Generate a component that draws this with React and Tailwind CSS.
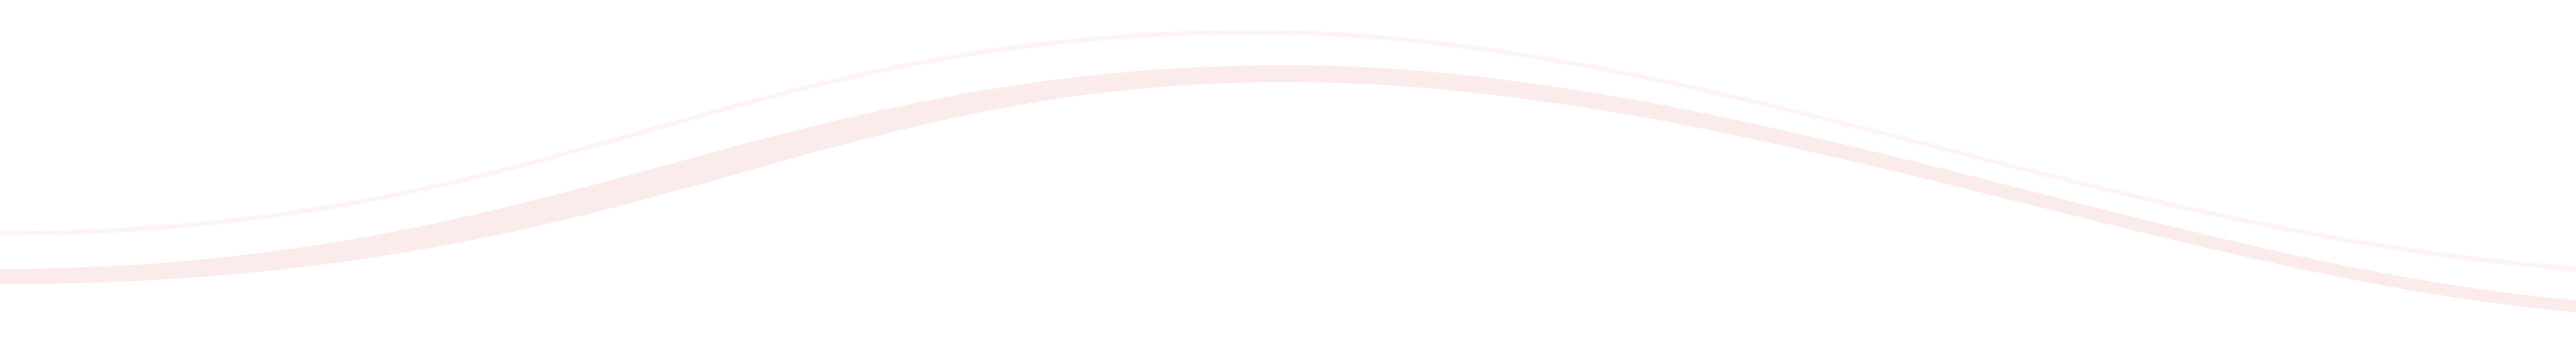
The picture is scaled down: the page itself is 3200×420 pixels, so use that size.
import React from "react";

// two soft waves: a thin light stroke and a pink band under it
const thinLine = "M0,290 C700,290 900,40 1560,40 C2100,40 2600,290 3200,334";

const band =
  "M0,334 C700,334 950,81 1600,81 C2150,81 2700,330 3200,373" +
  " L3200,388 C2700,345 2150,102 1600,102 C1000,102 800,353 0,353 Z";

export default function App() {
  return (
    <div className="w-full h-[420px] bg-white overflow-hidden">
      <svg
        className="block w-full h-full"
        viewBox="0 0 3200 420"
        preserveAspectRatio="none"
      >
        <path d={thinLine} fill="none" stroke="#fdf4f3" strokeWidth="5.5" />
        <path d={band} fill="#fbeceb" />
      </svg>
    </div>
  );
}
